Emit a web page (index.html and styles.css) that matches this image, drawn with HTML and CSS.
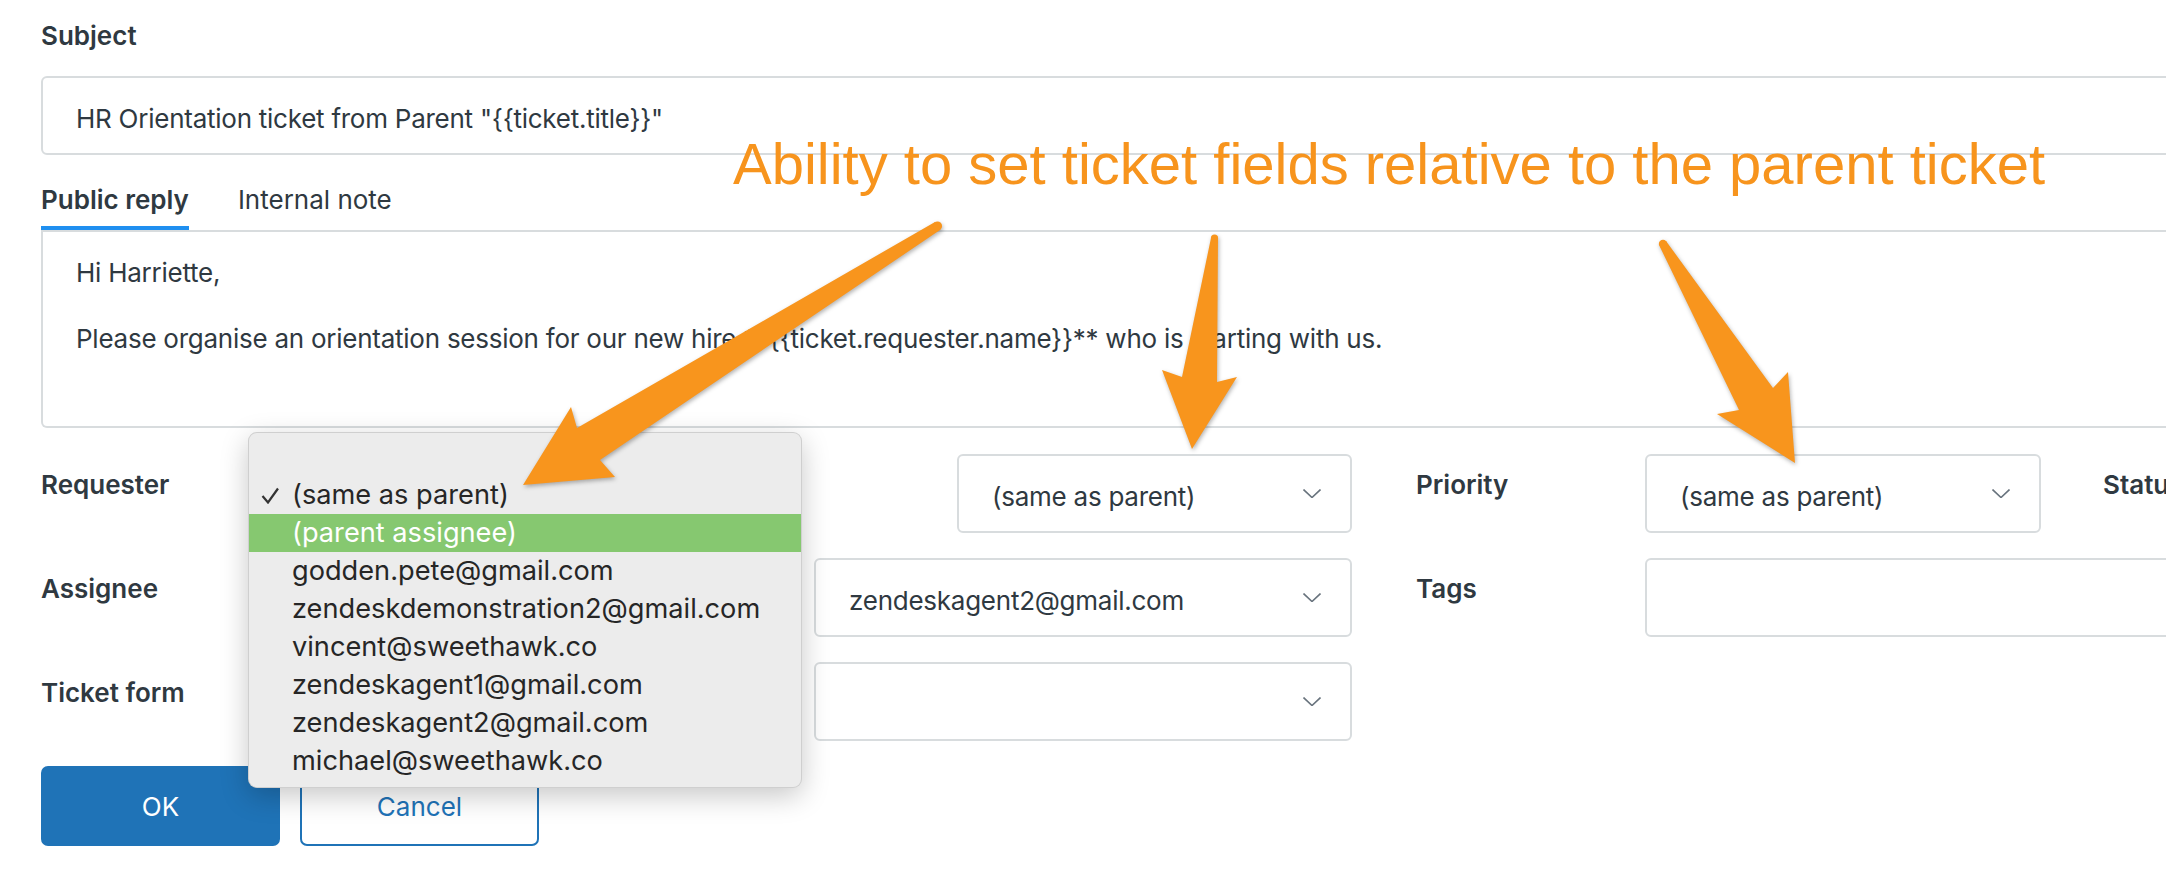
FILE: index.html
```html
<!DOCTYPE html>
<html lang="en">
<head>
    <meta charset="UTF-8">
    <meta name="viewport" content="width=device-width, initial-scale=1.0">
    <title>Child ticket settings</title>
    <link rel="stylesheet" href="styles.css">
</head>
<body>
    <div class="page">
        <div class="field-label">Subject</div>
        <div class="text-input subject">HR Orientation ticket from Parent "{{ticket.title}}"</div>

        <div class="tabs">
            <span class="tab active">Public reply</span>
            <span class="tab">Internal note</span>
        </div>
        <div class="editor">
            <p>Hi Harriette,</p>
            <p>Please organise an orientation session for our new hire **{{ticket.requester.name}}** who is starting with us.</p>
        </div>

        <div class="fields">
            <div class="row-label">Requester</div>
            <div class="select narrow">
                <span>(same as parent)</span>
                <svg class="chevron" viewBox="0 0 18 9"><polyline points="0.5,0.5 9,8.5 17.5,0.5"/></svg>
            </div>
            <div class="row-label second">Priority</div>
            <div class="select">
                <span>(same as parent)</span>
                <svg class="chevron" viewBox="0 0 18 9"><polyline points="0.5,0.5 9,8.5 17.5,0.5"/></svg>
            </div>
            <div class="row-label third">Status</div>

            <div class="row-label">Assignee</div>
            <div class="select">
                <span>zendeskagent2@gmail.com</span>
                <svg class="chevron" viewBox="0 0 18 9"><polyline points="0.5,0.5 9,8.5 17.5,0.5"/></svg>
            </div>
            <div class="row-label second">Tags</div>
            <div class="text-input tags"></div>

            <div class="row-label">Ticket form</div>
            <div class="select">
                <span></span>
                <svg class="chevron" viewBox="0 0 18 9"><polyline points="0.5,0.5 9,8.5 17.5,0.5"/></svg>
            </div>
        </div>

        <div class="actions">
            <button class="btn primary">OK</button>
            <button class="btn secondary">Cancel</button>
        </div>
    </div>

    <!-- open requester dropdown -->
    <ul class="menu">
        <li class="checked">
            <svg class="check" viewBox="0 0 18 17"><polyline points="1.5,9 7,15.5 17,1.5"/></svg>
            (same as parent)
        </li>
        <li class="hover">(parent assignee)</li>
        <li>godden.pete@gmail.com</li>
        <li>zendeskdemonstration2@gmail.com</li>
        <li>vincent@sweethawk.co</li>
        <li>zendeskagent1@gmail.com</li>
        <li>zendeskagent2@gmail.com</li>
        <li>michael@sweethawk.co</li>
    </ul>

    <!-- annotation -->
    <div class="callout">Ability to set ticket fields relative to the parent ticket</div>
    <svg class="arrows" viewBox="0 0 2166 880">
        <path d="M935,222 L577,428 L571,407 L523,485 L615,477 L600,460 L940,230 Z"/>
        <circle cx="937.5" cy="226" r="4.6"/>
        <path d="M1211,238 L1182,377 L1162,370 L1192,449 L1237,377 L1217,382 L1218,238 Z"/>
        <circle cx="1214.5" cy="238" r="3.6"/>
        <path d="M1666,241 L1773,388 L1788,372 L1795,463 L1717,414 L1739,410 L1660,247 Z"/>
        <circle cx="1663" cy="244" r="4.2"/>
    </svg>
</body>
</html>
```

FILE: styles.css
```css
html, body {
    margin: 0;
    overflow: hidden;
    background: #fff;
}

body {
    font-family: Inter, "Noto Sans", sans-serif;
    color: #2f3941;
    font-size: 26px;
}

.page {
    width: 2300px;
    padding: 16px 0 0 41px;
}

.field-label, .row-label {
    font-weight: 600;
    line-height: 40px;
}

.field-label {
    margin-bottom: 20px;
}

.text-input {
    box-sizing: border-box;
    height: 79px;
    border: 2px solid #d8dcde;
    border-radius: 6px;
    padding: 5px 33px 0;
    display: flex;
    align-items: center;
    background: #fff;
    letter-spacing: -0.25px;
}

/* tabs */
.tabs {
    margin-top: 25px;
    display: flex;
    gap: 49px;
    border-bottom: 2px solid #d8dcde;
}

.tab {
    line-height: 40px;
    padding-bottom: 6px;
    border-bottom: 4px solid transparent;
}

.tab.active {
    font-weight: 600;
    border-bottom-color: #1f8ff0;
}

.editor {
    box-sizing: border-box;
    height: 196px;
    border: 2px solid #d8dcde;
    border-top: none;
    border-radius: 0 0 6px 6px;
    padding: 21px 33px 0;
    letter-spacing: -0.25px;
}

.editor p {
    margin: 0 0 26px;
    line-height: 40px;
}

/* ticket fields */
.fields {
    margin-top: 26px;
    display: grid;
    grid-template-columns: 773px 538px 293px 396px 1fr;
    grid-auto-rows: 79px;
    row-gap: 25px;
}

.row-label {
    padding-top: 11px;
}

.row-label.second {
    padding-left: 64px;
}

.row-label.third {
    padding-left: 62px;
}

.select {
    box-sizing: border-box;
    height: 79px;
    border: 2px solid #d8dcde;
    border-radius: 6px;
    padding: 0 29px 0 33px;
    display: flex;
    align-items: center;
    justify-content: space-between;
    background: #fff;
    letter-spacing: -0.25px;
}

.select span {
    padding-top: 5px;
}

.select.narrow {
    width: 395px;
    justify-self: end;
}

.chevron {
    width: 18px;
    height: 9px;
    fill: none;
    stroke: #68737d;
    stroke-width: 1.6;
}

.tags {
    grid-column: 4 / 6;
}

.actions {
    margin-top: 25px;
    display: flex;
    gap: 20px;
}

.btn {
    width: 239px;
    height: 80px;
    border-radius: 7px;
    font-family: inherit;
    font-size: 26px;
    cursor: pointer;
}

.btn.primary {
    background: #1f73b7;
    border: 2px solid #1f73b7;
    color: #fff;
}

.btn.secondary {
    background: #fff;
    border: 2px solid #1f73b7;
    color: #1f73b7;
}

/* dropdown menu */
.menu {
    position: absolute;
    left: 248px;
    top: 432px;
    width: 554px;
    height: 356px;
    box-sizing: border-box;
    margin: 0;
    padding: 43px 0 0;
    list-style: none;
    background: #ececec;
    border: 1px solid rgba(0, 0, 0, 0.12);
    border-radius: 9px;
    box-shadow: 0 8px 28px rgba(0, 0, 0, 0.22);
    font-size: 27.2px;
    color: #262626;
}

.menu li {
    position: relative;
    height: 38px;
    line-height: 38px;
    padding-left: 43px;
    white-space: nowrap;
}

.menu li.hover {
    background: #86c870;
    color: #fff;
}

.check {
    position: absolute;
    left: 12px;
    top: 11px;
    width: 18px;
    height: 17px;
    fill: none;
    stroke: #333;
    stroke-width: 2.2;
}

/* annotation */
.callout {
    position: absolute;
    left: 733px;
    top: 135px;
    font-family: "Liberation Sans", Arial, sans-serif;
    font-size: 58px;
    line-height: 1;
    color: #f7941d;
    white-space: nowrap;
}

.arrows {
    position: absolute;
    left: 0;
    top: 0;
    width: 2166px;
    height: 880px;
    pointer-events: none;
    fill: #f8951d;
    filter: drop-shadow(1px 2px 2px rgba(0, 0, 0, 0.3));
}
```
